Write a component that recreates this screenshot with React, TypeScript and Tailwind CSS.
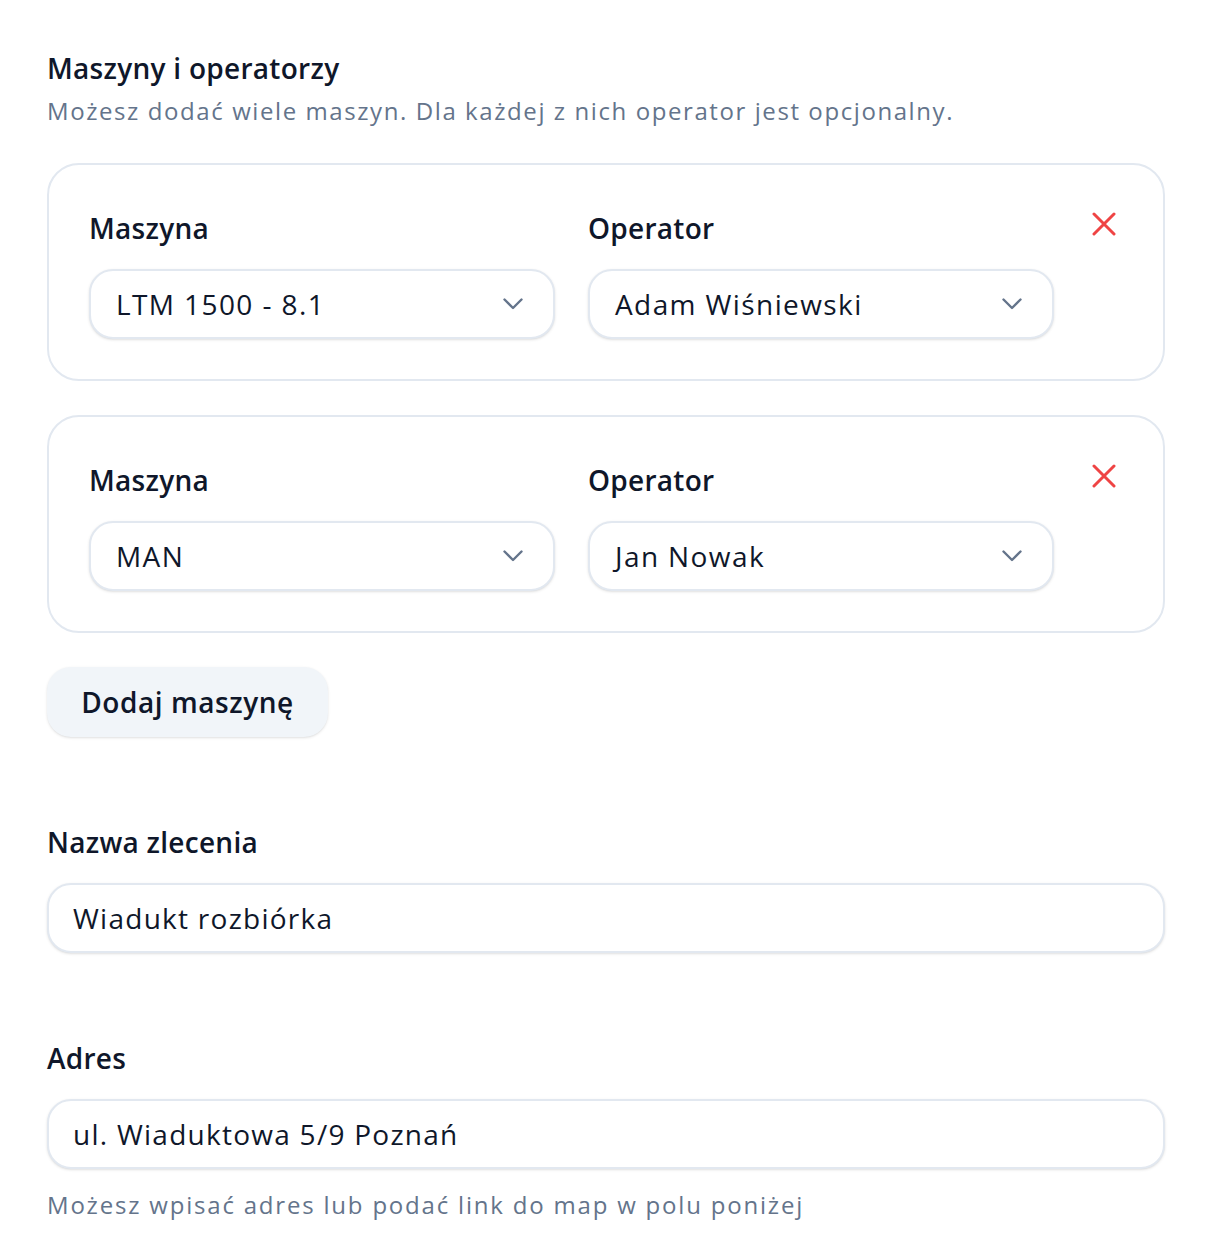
import React from 'react';

const FONT = { fontFamily: '"Open Sans", "Noto Sans", sans-serif' };

const Chevron: React.FC = () => (
  <svg width="20" height="12" viewBox="0 0 20 12" fill="none" className="shrink-0">
    <polyline points="1.5,1.5 10,10 18.5,1.5" stroke="#64748b" strokeWidth="2.4" strokeLinecap="round" strokeLinejoin="round" />
  </svg>
);

const CloseIcon: React.FC = () => (
  <svg width="24" height="24" viewBox="0 0 24 24" fill="none">
    <path d="M2 2L22 22M22 2L2 22" stroke="#ef4444" strokeWidth="3" strokeLinecap="round" />
  </svg>
);

const SelectBox: React.FC<{ value: string }> = ({ value }) => (
  <div className="flex h-[70px] w-[466px] items-center justify-between rounded-[24px] border-2 border-[#e2e8f0] bg-white pl-[25px] pr-[30px] shadow-sm">
    <span className="text-[28px] tracking-[0.05em] text-[#0f172a]">{value}</span>
    <Chevron />
  </div>
);

const MachineRow: React.FC<{ machine: string; operator: string }> = ({ machine, operator }) => (
  <div className="flex rounded-[32px] border-2 border-[#e2e8f0] pb-[40px] pl-[40px] pt-[45px]">
    <div className="flex gap-[33px]">
      <div>
        <div className="h-[36px] text-[28px] font-semibold leading-[36px] tracking-[0.01em] text-[#0f172a]">Maszyna</div>
        <div className="mt-[23px]">
          <SelectBox value={machine} />
        </div>
      </div>
      <div>
        <div className="h-[36px] text-[28px] font-semibold leading-[36px] tracking-[0.01em] text-[#0f172a]">Operator</div>
        <div className="mt-[23px]">
          <SelectBox value={operator} />
        </div>
      </div>
    </div>
    <div className="ml-[38px] mt-[2px]">
      <button type="button" className="p-0">
        <CloseIcon />
      </button>
    </div>
  </div>
);

const TextField: React.FC<{ label: string; value: string }> = ({ label, value }) => (
  <div>
    <div className="h-[36px] text-[28px] font-semibold leading-[36px] tracking-[0.01em] text-[#0f172a]">{label}</div>
    <div className="mt-[23px] flex h-[70px] items-center rounded-[24px] border-2 border-[#e2e8f0] bg-white pl-[24px] shadow-sm">
      <span className="text-[28px] tracking-[0.045em] text-[#0f172a]">{value}</span>
    </div>
  </div>
);

export default function App() {
  return (
    <div className="min-h-screen bg-white" style={FONT}>
      <div className="w-[1165px] pb-[17px] pl-[47px] pt-[50px]">
        <h2 className="text-[28px] font-semibold leading-[36px] tracking-[0.01em] text-[#0f172a]">Maszyny i operatorzy</h2>
        <p className="mt-[9px] text-[24px] leading-[32px] tracking-[0.066em] text-[#64748b]">
          Możesz dodać wiele maszyn. Dla każdej z nich operator jest opcjonalny.
        </p>

        <div className="mt-[36px] flex flex-col gap-[34px]">
          <MachineRow machine="LTM 1500 - 8.1" operator="Adam Wiśniewski" />
          <MachineRow machine="MAN" operator="Jan Nowak" />
        </div>

        <button
          type="button"
          className="mt-[34px] h-[70px] w-[281px] rounded-[24px] bg-[#f1f5f9] text-[28px] font-semibold tracking-[0.02em] text-[#0f172a] shadow-sm"
        >
          Dodaj maszynę
        </button>

        <div className="mt-[87px]">
          <TextField label="Nazwa zlecenia" value="Wiadukt rozbiórka" />
        </div>

        <div className="mt-[87px]">
          <TextField label="Adres" value="ul. Wiaduktowa 5/9 Poznań" />
        </div>
        <p className="mt-[20px] text-[24px] leading-[32px] tracking-[0.075em] text-[#64748b]">
          Możesz wpisać adres lub podać link do map w polu poniżej
        </p>
      </div>
    </div>
  );
}
